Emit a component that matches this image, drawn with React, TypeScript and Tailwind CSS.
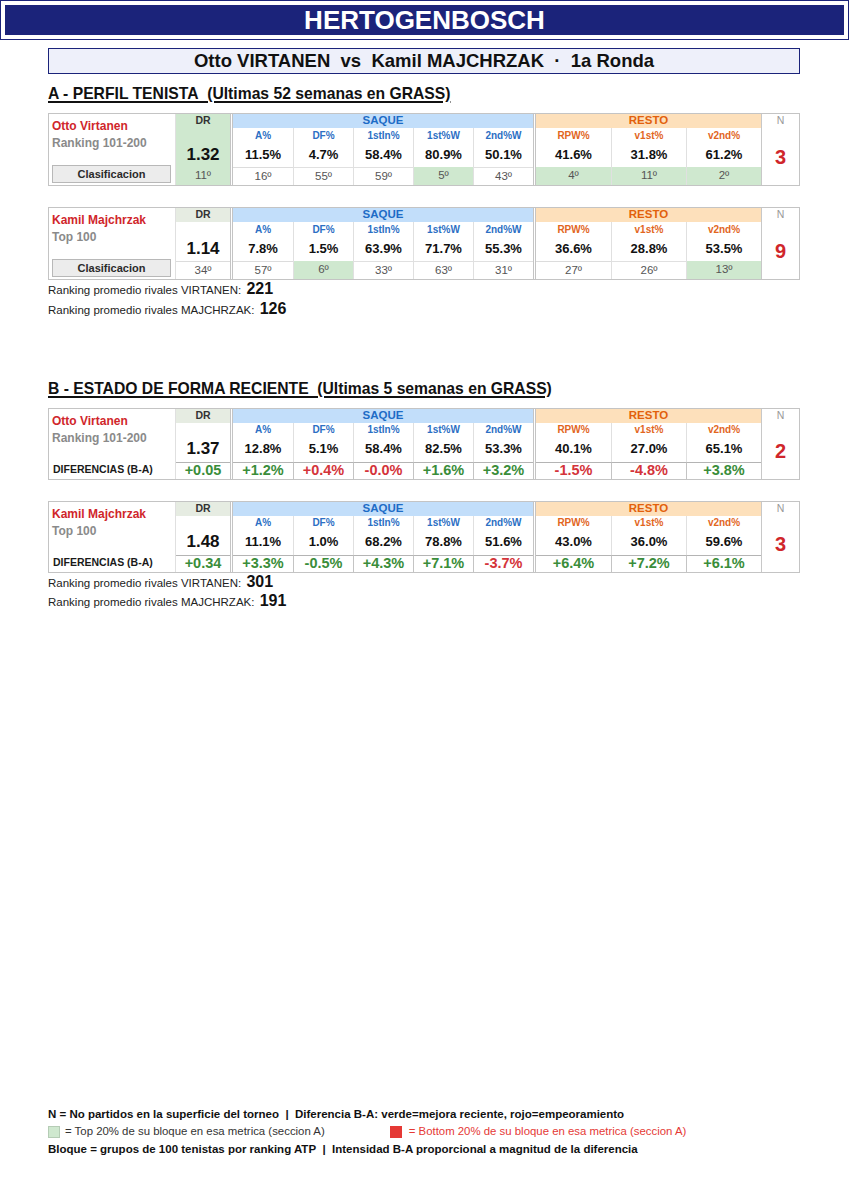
import React from "react";

type Bot = { t: string; g?: boolean; c?: "g" | "r" };

type TableProps = {
  name: string;
  sub: string;
  dr: string;
  drGreen?: boolean;
  values: string[];
  bottom: Bot[]; // index 0 = DR, 1..8 = stats
  n: string;
  mode: "rank" | "diff";
};

const COLS = [
  "col-start-4",
  "col-start-5",
  "col-start-6",
  "col-start-7",
  "col-start-8",
  "col-start-10",
  "col-start-11",
  "col-start-12",
];

const LABELS = ["A%", "DF%", "1stIn%", "1st%W", "2nd%W", "RPW%", "v1st%", "v2nd%"];

function StatTable({ name, sub, dr, drGreen, values, bottom, n, mode }: TableProps) {
  const drBg = drGreen ? "bg-[#cfe8cf]" : "bg-white";
  const drHeadBg = drGreen ? "bg-[#cfe8cf]" : "bg-[#e6ece2]";
  const rows = mode === "rank" ? "grid-rows-[14px_14px_25px_18px]" : "grid-rows-[14px_14px_25px_17px]";
  return (
    <div className="mx-[48px] w-[752px] border border-[#c4c4c4] bg-white">
      <div className={`grid grid-cols-[127px_54px_3px_60px_60px_60px_60px_60px_3px_75px_75px_75px_38px] ${rows}`}>
        {/* name cell */}
        <div className="col-start-1 row-start-1 row-span-4 flex flex-col border-r border-[#e0e0e0] pl-[3px]">
          <div className="pt-[5px] text-[12px] font-bold leading-[14px] text-[#d0262b]">{name}</div>
          <div className="mt-[3px] text-[12px] font-bold leading-[14px] text-[#8a8a8a]">{sub}</div>
          {mode === "rank" ? (
            <div className="mt-auto mb-[2px] mr-[4px] flex h-[18px] items-center justify-center border border-[#b8b8b8] bg-[#ececec] text-[11px] font-bold text-[#2a2a2a]">
              Clasificacion
            </div>
          ) : (
            <div className="mt-auto flex h-[17px] items-center pl-[1px] text-[10.5px] font-bold text-[#1a1a1a]">
              DIFERENCIAS (B-A)
            </div>
          )}
        </div>

        {/* DR column */}
        <div className={`col-start-2 row-start-1 flex items-center justify-center text-[10.5px] font-bold text-[#333] ${drHeadBg}`}>
          DR
        </div>
        <div className={`col-start-2 row-start-2 ${drBg}`} />
        <div className={`col-start-2 row-start-3 flex items-center justify-center text-[17px] font-bold text-[#111] ${drBg}`}>
          {dr}
        </div>
        {mode === "rank" ? (
          <div
            className={`col-start-2 row-start-4 flex items-center justify-center text-[11.5px] text-[#555] ${
              bottom[0].g ? "bg-[#cfe8cf]" : "border-t border-[#dcdcdc] bg-white"
            }`}
          >
            {bottom[0].t}
          </div>
        ) : (
          <div
            className={`col-start-2 row-start-4 flex items-center justify-center border-t border-[#b4b4b4] text-[14.5px] font-bold ${
              bottom[0].c === "g" ? "text-[#3a8d3a]" : "text-[#d4343a]"
            }`}
          >
            {bottom[0].t}
          </div>
        )}

        {/* separators */}
        <div className="col-start-3 row-start-1 row-span-4 border-x border-[#c4c4c4] bg-white" />
        <div className="col-start-9 row-start-1 row-span-4 border-x border-[#c4c4c4] bg-white" />

        {/* bands */}
        <div className="col-start-4 col-span-5 row-start-1 flex items-center justify-center bg-[#c2defa] text-[11.5px] font-bold text-[#1d6cc6]">
          SAQUE
        </div>
        <div className="col-start-10 col-span-3 row-start-1 flex items-center justify-center bg-[#fde0bb] text-[11.5px] font-bold text-[#e2600c]">
          RESTO
        </div>

        {/* N column */}
        <div className="col-start-13 row-start-1 flex items-center justify-center border-l border-[#c8c8c8] text-[10.5px] text-[#999]">
          N
        </div>
        <div className="col-start-13 row-start-2 row-span-3 flex items-center justify-center border-l border-[#c8c8c8] text-[20px] font-bold text-[#d0262b]">
          {n}
        </div>

        {/* stat columns */}
        {LABELS.map((lab, i) => {
          const saque = i < 5;
          const firstOfGroup = i === 0 || i === 5;
          const bl = firstOfGroup ? "" : "border-l border-[#e0e0e0]";
          const b = bottom[i + 1];
          return (
            <React.Fragment key={lab}>
              <div
                className={`${COLS[i]} row-start-2 flex items-center justify-center text-[10px] font-bold ${bl} ${
                  saque ? "text-[#2c6fc4]" : "text-[#e2661e]"
                }`}
              >
                {lab}
              </div>
              <div className={`${COLS[i]} row-start-3 flex items-center justify-center text-[13px] font-bold text-[#111] ${bl}`}>
                {values[i]}
              </div>
              {mode === "rank" ? (
                <div
                  className={`${COLS[i]} row-start-4 flex items-center justify-center text-[11.5px] text-[#555] ${bl} ${
                    b.g ? "bg-[#cfe8cf]" : "border-t border-[#dcdcdc] bg-white"
                  }`}
                >
                  {b.t}
                </div>
              ) : (
                <div
                  className={`${COLS[i]} row-start-4 flex items-center justify-center border-t border-[#b4b4b4] text-[14.5px] font-bold ${
                    firstOfGroup ? "" : "border-l border-l-[#c4c4c4]"
                  } ${b.c === "g" ? "text-[#3a8d3a]" : "text-[#d4343a]"}`}
                >
                  {b.t}
                </div>
              )}
            </React.Fragment>
          );
        })}
      </div>
    </div>
  );
}

function RivalLines({ a, b }: { a: string; b: string }) {
  return (
    <div className="mx-[48px] text-[11.5px] text-[#222]">
      <div className="leading-[17.5px]">
        Ranking promedio rivales VIRTANEN: <span className="ml-[2px] text-[16px] font-bold text-[#111]">{a}</span>
      </div>
      <div className="leading-[18px]">
        Ranking promedio rivales MAJCHRZAK: <span className="ml-[2px] text-[16px] font-bold text-[#111]">{b}</span>
      </div>
    </div>
  );
}

export default function App() {
  return (
    <div className="flex h-[1200px] w-[849px] flex-col bg-white font-['Liberation_Sans',Arial,sans-serif] text-[#111]">
      {/* Header */}
      <div className="border border-[#1b237a] p-[4px]">
        <div className="flex h-[30px] items-center justify-center bg-[#1b237a] text-[26px] font-bold leading-none text-white">
          HERTOGENBOSCH
        </div>
      </div>

      {/* Subtitle */}
      <div className="mx-[48px] mt-[8px] flex h-[26px] w-[752px] items-center justify-center border-[1.5px] border-[#1b237a] bg-[#eef0fa] text-[18.5px] font-bold text-[#111]">
        Otto VIRTANEN&nbsp;&nbsp;vs&nbsp;&nbsp;Kamil MAJCHRZAK&nbsp;&nbsp;·&nbsp;&nbsp;1a Ronda
      </div>

      {/* Section A */}
      <div className="mx-[48px] mt-[10px] text-[15.7px] font-bold leading-[20px] text-[#111] underline decoration-[1.5px] underline-offset-[2px]">
        A - PERFIL TENISTA&nbsp;&nbsp;(Ultimas 52 semanas en GRASS)
      </div>

      <div className="mt-[9px]">
        <StatTable
          name="Otto Virtanen"
          sub="Ranking 101-200"
          dr="1.32"
          drGreen
          values={["11.5%", "4.7%", "58.4%", "80.9%", "50.1%", "41.6%", "31.8%", "61.2%"]}
          bottom={[
            { t: "11º", g: true },
            { t: "16º" },
            { t: "55º" },
            { t: "59º" },
            { t: "5º", g: true },
            { t: "43º" },
            { t: "4º", g: true },
            { t: "11º", g: true },
            { t: "2º", g: true },
          ]}
          n="3"
          mode="rank"
        />
      </div>

      <div className="mt-[21px]">
        <StatTable
          name="Kamil Majchrzak"
          sub="Top 100"
          dr="1.14"
          values={["7.8%", "1.5%", "63.9%", "71.7%", "55.3%", "36.6%", "28.8%", "53.5%"]}
          bottom={[
            { t: "34º" },
            { t: "57º" },
            { t: "6º", g: true },
            { t: "33º" },
            { t: "63º" },
            { t: "31º" },
            { t: "27º" },
            { t: "26º" },
            { t: "13º", g: true },
          ]}
          n="9"
          mode="rank"
        />
      </div>

      <RivalLines a="221" b="126" />

      {/* Section B */}
      <div className="mx-[48px] mt-[60px] text-[15.7px] font-bold leading-[20px] text-[#111] underline decoration-[1.5px] underline-offset-[2px]">
        B - ESTADO DE FORMA RECIENTE&nbsp;&nbsp;(Ultimas 5 semanas en GRASS)
      </div>

      <div className="mt-[9px]">
        <StatTable
          name="Otto Virtanen"
          sub="Ranking 101-200"
          dr="1.37"
          values={["12.8%", "5.1%", "58.4%", "82.5%", "53.3%", "40.1%", "27.0%", "65.1%"]}
          bottom={[
            { t: "+0.05", c: "g" },
            { t: "+1.2%", c: "g" },
            { t: "+0.4%", c: "r" },
            { t: "-0.0%", c: "r" },
            { t: "+1.6%", c: "g" },
            { t: "+3.2%", c: "g" },
            { t: "-1.5%", c: "r" },
            { t: "-4.8%", c: "r" },
            { t: "+3.8%", c: "g" },
          ]}
          n="2"
          mode="diff"
        />
      </div>

      <div className="mt-[21px]">
        <StatTable
          name="Kamil Majchrzak"
          sub="Top 100"
          dr="1.48"
          values={["11.1%", "1.0%", "68.2%", "78.8%", "51.6%", "43.0%", "36.0%", "59.6%"]}
          bottom={[
            { t: "+0.34", c: "g" },
            { t: "+3.3%", c: "g" },
            { t: "-0.5%", c: "g" },
            { t: "+4.3%", c: "g" },
            { t: "+7.1%", c: "g" },
            { t: "-3.7%", c: "r" },
            { t: "+6.4%", c: "g" },
            { t: "+7.2%", c: "g" },
            { t: "+6.1%", c: "g" },
          ]}
          n="3"
          mode="diff"
        />
      </div>

      <RivalLines a="301" b="191" />

      {/* Footer */}
      <div className="mx-[48px] mt-auto mb-[42px] leading-[17.5px]">
        <div className="text-[11.5px] font-bold text-[#111]">
          N = No partidos en la superficie del torneo&nbsp;&nbsp;|&nbsp;&nbsp;Diferencia B-A: verde=mejora reciente, rojo=empeoramiento
        </div>
        <div className="flex items-center text-[11.4px]">
          <span className="inline-block h-[12px] w-[12px] border border-[#b5ccb5] bg-[#cfe8cf]" />
          <span className="ml-[5px] text-[#333]">= Top 20% de su bloque en esa metrica (seccion A)</span>
          <span className="ml-[65px] inline-block h-[12px] w-[12px] bg-[#e53935]" />
          <span className="ml-[7px] text-[#e53935]">= Bottom 20% de su bloque en esa metrica (seccion A)</span>
        </div>
        <div className="text-[11.5px] font-bold text-[#111]">
          Bloque = grupos de 100 tenistas por ranking ATP&nbsp;&nbsp;|&nbsp;&nbsp;Intensidad B-A proporcional a magnitud de la diferencia
        </div>
      </div>
    </div>
  );
}
